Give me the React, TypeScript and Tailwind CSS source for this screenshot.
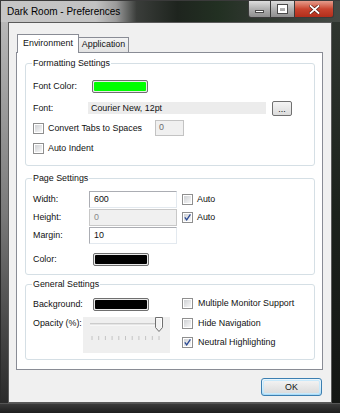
import React from "react";

function Check({ checked }: { checked?: boolean }) {
  return (
    <span className="w-[11px] h-[11px] shrink-0 border border-[#8f8f8f] bg-white p-[1px] flex relative">
      <span className="block w-full h-full bg-gradient-to-br from-[#cfd1d4] to-[#f8f8f8]" />
      {checked && (
        <svg width="9" height="9" viewBox="0 0 9 9" className="absolute left-0 top-0">
          <path d="M1.8 4.4 L3.7 6.9 L7.4 1.4" stroke="#2b4a94" strokeWidth="1.3" fill="none" />
        </svg>
      )}
    </span>
  );
}

function Swatch({ fill }: { fill: string }) {
  return (
    <span className="w-[56px] h-[13px] rounded-[2px] border border-[#6f6f6f] bg-[#e9e9e9] p-[1px] flex shrink-0">
      <span className={"block w-full h-full rounded-[1px] " + fill} />
    </span>
  );
}

function Label({ children, w }: { children: React.ReactNode; w: string }) {
  return <span className={"shrink-0 leading-[11px] " + w}>{children}</span>;
}

function Slider() {
  const ticks = [9, 15.7, 22.4, 29.1, 35.8, 42.5, 49.2, 55.9, 62.6, 69.3, 76];
  return (
    <div className="w-[87px] h-[36px] bg-[#efefef] shrink-0">
      <svg width="87" height="36" viewBox="0 0 87 36">
        <line x1="7" y1="7" x2="78" y2="7" stroke="#a9a9a9" strokeWidth="1" />
        <line x1="7" y1="8" x2="78" y2="8" stroke="#ffffff" strokeWidth="1" />
        {ticks.map((x) => (
          <line key={x} x1={x} y1="19" x2={x} y2="23" stroke="#c4c4c4" strokeWidth="1" />
        ))}
        <path d="M72.5 0.5 H79.5 V10.5 L76 14.5 L72.5 10.5 Z" fill="#f2f2f2" stroke="#707070" strokeWidth="1" />
        <path d="M73.5 1.5 H78.5 V9.5" fill="none" stroke="#ffffff" strokeWidth="1" />
      </svg>
    </div>
  );
}

export default function App() {
  return (
    <div className="w-[340px] h-[413px] flex flex-col bg-[#262826] overflow-hidden font-['Liberation_Sans',Arial,sans-serif] text-[8.9px] text-[#111]">
      {/* Title bar */}
      <div className="h-[22px] shrink-0 flex items-start border-t border-l border-[#3a3a3a] bg-[linear-gradient(90deg,#c6c6c6_0%,#c2c2c2_28%,#9a9a9a_34%,#3a3d3a_40%,#1e241e_52%,#223022_64%,#2c352c_72%,#454a45_100%)]">
        <div className="pl-[6px] pt-[5px] text-[10px] leading-[12px] text-black">Dark Room - Preferences</div>
        <div className="ml-auto mr-[6px] flex h-[18px] -mt-[1px]">
          <div className="w-[23px] h-full border border-[#3a3a3a] rounded-bl-[3px] bg-gradient-to-b from-[#dedede] via-[#b0b0b0] to-[#8e8e8e] flex items-center justify-center">
            <span className="w-[9px] h-[3px] bg-white border border-[#4a4a4a] mt-[5px]" />
          </div>
          <div className="w-[24px] h-full border border-l-0 border-[#3a3a3a] bg-gradient-to-b from-[#dedede] via-[#b0b0b0] to-[#8e8e8e] flex items-center justify-center">
            <span className="w-[9px] h-[8px] border-[2px] border-t-[3px] border-white outline outline-1 outline-[#4a4a4a]" />
          </div>
          <div className="w-[39px] h-full border border-l-0 border-[#3a3a3a] rounded-br-[3px] bg-gradient-to-b from-[#e59c8c] via-[#c9442f] to-[#b22e1b] flex items-center justify-center">
            <svg width="11" height="9" viewBox="0 0 11 9">
              <path d="M1.5 1 L9.5 8 M9.5 1 L1.5 8" stroke="#5a1a10" strokeWidth="3.2" strokeLinecap="square" />
              <path d="M1.5 1 L9.5 8 M9.5 1 L1.5 8" stroke="#ffffff" strokeWidth="1.8" strokeLinecap="square" />
            </svg>
          </div>
        </div>
      </div>

      {/* Middle */}
      <div className="flex-1 flex min-h-0">
        <div className="w-[8px] bg-gradient-to-b from-[#b8b8b8] via-[#7a7a7a] to-[#2a2a2a] border-l border-[#2a2a2a]" />
        <div className="flex-1 bg-[#f0f0f0] border border-[#5a5a5a] flex flex-col">
          {/* Tabs */}
          <div className="mt-[11px] ml-[7px] mr-[8px] flex flex-col">
            <div className="flex items-end h-[18px] pl-[1px] relative z-10">
              <div className="w-[62px] h-[19px] -mb-[1px] bg-white border border-b-0 border-[#898c95] flex items-center justify-center">
                Environment
              </div>
              <div className="w-[50px] h-[15px] bg-gradient-to-b from-[#f3f3f3] to-[#e3e3e3] border border-l-0 border-b-0 border-[#898c95] flex items-center justify-center">
                Application
              </div>
            </div>
            <div className="h-[318px] bg-white border border-[#898c95] flex flex-col">
              {/* Formatting Settings */}
              <fieldset className="mt-[4px] ml-[8px] mr-[7px] border border-[#d5dfe5] rounded-[3px] px-[7px] pt-[7px] pb-[6px]">
                <legend className="px-[1px] -ml-[1px] leading-[12px]">Formatting Settings</legend>
                <div className="h-[20px] flex items-center">
                  <Label w="w-[59px]">Font Color:</Label>
                  <Swatch fill="bg-[#00ff00]" />
                </div>
                <div className="h-[20px] mt-[2px] flex items-center">
                  <Label w="w-[55px]">Font:</Label>
                  <div className="w-[178px] h-[12px] bg-[#ececec] flex items-center pl-[3px] leading-[11px]">Courier New, 12pt</div>
                  <div className="ml-[6px] w-[20px] h-[15px] rounded-[2px] border border-[#707070] bg-gradient-to-b from-[#f4f4f4] to-[#dcdcdc] flex items-end justify-center leading-[10px] pb-[1px]">...</div>
                </div>
                <div className="h-[20px] flex items-center">
                  <Check />
                  <span className="ml-[4px] leading-[11px] w-[107px] shrink-0">Convert Tabs to Spaces</span>
                  <div className="w-[29px] h-[16px] border border-[#c3c3c3] bg-[#f0f0f0] text-[#6d6d6d] flex items-center pl-[3px]">0</div>
                </div>
                <div className="h-[21px] flex items-center">
                  <Check />
                  <span className="ml-[4px] leading-[11px]">Auto Indent</span>
                </div>
              </fieldset>

              {/* Page Settings */}
              <fieldset className="mt-[6px] ml-[8px] mr-[7px] border border-[#d5dfe5] rounded-[3px] px-[7px] pt-[7px] pb-[1px]">
                <legend className="px-[1px] -ml-[1px] leading-[12px]">Page Settings</legend>
                <div className="h-[18px] flex items-start">
                  <span className="w-[56px] leading-[17px] shrink-0">Width:</span>
                  <div className="w-[88px] h-[17px] border border-[#abadb3] border-r-[#e3e9ef] border-b-[#e3e9ef] bg-white flex items-center pl-[4px]">600</div>
                  <div className="ml-[5px] h-[17px] flex items-center">
                    <Check />
                    <span className="ml-[4px] leading-[11px]">Auto</span>
                  </div>
                </div>
                <div className="h-[18px] flex items-start">
                  <span className="w-[56px] leading-[17px] shrink-0">Height:</span>
                  <div className="w-[88px] h-[17px] border border-[#c8c8c8] bg-[#f0f0f0] text-[#8a8a8a] flex items-center pl-[4px]">0</div>
                  <div className="ml-[5px] h-[17px] flex items-center">
                    <Check checked />
                    <span className="ml-[4px] leading-[11px]">Auto</span>
                  </div>
                </div>
                <div className="h-[18px] flex items-start">
                  <span className="w-[56px] leading-[17px] shrink-0">Margin:</span>
                  <div className="w-[88px] h-[17px] border border-[#abadb3] border-r-[#e3e9ef] border-b-[#e3e9ef] bg-white flex items-center pl-[4px]">10</div>
                </div>
                <div className="h-[28px] flex items-center">
                  <Label w="w-[60px]">Color:</Label>
                  <Swatch fill="bg-black" />
                </div>
              </fieldset>

              {/* General Settings */}
              <fieldset className="mt-[3px] ml-[8px] mr-[7px] border border-[#d5dfe5] rounded-[3px] px-[7px] pt-[4px] pb-[6px] flex">
                <legend className="px-[1px] -ml-[1px] leading-[12px]">General Settings</legend>
                <div className="flex w-full">
                  <div className="w-[149px] shrink-0 flex flex-col">
                    <div className="h-[20px] flex items-center">
                      <Label w="w-[60px]">Background:</Label>
                      <Swatch fill="bg-black" />
                    </div>
                    <div className="mt-[3px] flex items-start">
                      <span className="w-[50px] shrink-0 leading-[11px] mt-[1px]">Opacity (%):</span>
                      <Slider />
                    </div>
                  </div>
                  <div className="flex flex-col">
                    <div className="h-[19px] flex items-center">
                      <Check />
                      <span className="ml-[5px] leading-[11px]">Multiple Monitor Support</span>
                    </div>
                    <div className="h-[20px] flex items-center">
                      <Check />
                      <span className="ml-[5px] leading-[11px]">Hide Navigation</span>
                    </div>
                    <div className="h-[19px] flex items-center">
                      <Check checked />
                      <span className="ml-[5px] leading-[11px]">Neutral Highlighting</span>
                    </div>
                  </div>
                </div>
              </fieldset>
            </div>
          </div>

          {/* OK button */}
          <div className="mt-[8px] mr-[9px] flex justify-end">
            <div className="w-[61px] h-[18px] rounded-[3px] border border-[#3c7fb1] bg-gradient-to-b from-[#eaf6fd] via-[#d9f0fc] to-[#a7d9f5] p-[1px]">
              <div className="w-full h-full rounded-[2px] border border-[#c8e9fb] bg-gradient-to-b from-[#f2f2f2] to-[#dcdcdc] flex items-center justify-center leading-[11px]">
                OK
              </div>
            </div>
          </div>
        </div>
        <div className="w-[8px] bg-gradient-to-b from-[#2f352f] via-[#1c221c] to-[#141614]" />
      </div>
      <div className="h-[10px] shrink-0 bg-gradient-to-b from-[#3a3a3a] to-[#1e1e1e] border-t border-[#555]" />
    </div>
  );
}
